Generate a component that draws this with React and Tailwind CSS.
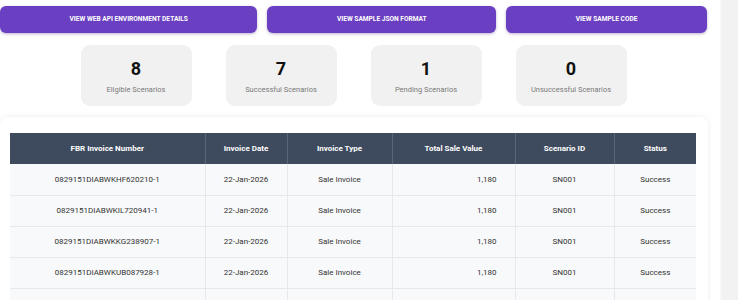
const buttons = [
  'View Web API Environment Details',
  'View Sample JSON Format',
  'View Sample Code',
]

const stats = [
  { value: 8, label: 'Eligible Scenarios' },
  { value: 7, label: 'Successful Scenarios' },
  { value: 1, label: 'Pending Scenarios' },
  { value: 0, label: 'Unsuccessful Scenarios' },
]

const columns = [
  { label: 'FBR Invoice Number', w: 'w-[195px]' },
  { label: 'Invoice Date', w: 'w-[82px]' },
  { label: 'Invoice Type', w: 'w-[105px]' },
  { label: 'Total Sale Value', w: 'w-[123px]' },
  { label: 'Scenario ID', w: 'w-[99px]' },
  { label: 'Status', w: 'w-[82px]' },
]

const rows = [
  '0829151DIABWKHF620210-1',
  '0829151DIABWKIL720941-1',
  '0829151DIABWKKG238907-1',
  '0829151DIABWKUB087928-1',
]

export default function App() {
  return (
    <div className="flex w-[738px] h-[300px] overflow-hidden bg-white font-['Roboto',sans-serif]">
      <main className="w-[720px] shrink-0">
        {/* Action buttons */}
        <div className="flex gap-[10px] w-[707px] pt-[6px]">
          {buttons.map((b) => (
            <button
              key={b}
              className="flex-auto h-[27px] rounded-[6px] bg-[#6b3fc1] text-white text-[6.6px] font-bold uppercase shadow-[0_1px_3px_rgba(60,30,120,0.35)]"
            >
              {b}
            </button>
          ))}
        </div>

        {/* Stats */}
        <div className="flex justify-center gap-[34px] w-[707px] mt-[12px]">
          {stats.map((s) => (
            <div
              key={s.label}
              className="w-[111px] h-[61px] rounded-[9px] bg-[#f1f1f1] flex flex-col items-center pt-[14px]"
            >
              <span className="text-[18px] leading-[20px] font-bold text-[#111]">{s.value}</span>
              <span className="text-[7.5px] text-[#7a7a7a] mt-[5px]">{s.label}</span>
            </div>
          ))}
        </div>

        {/* Table panel */}
        <div className="w-[708px] mt-[11px] rounded-[8px] bg-white shadow-[0_0_6px_rgba(0,0,0,0.08)] pl-[10px] pt-[16px]">
          <table className="border-collapse table-fixed text-[8px]">
            <thead>
              <tr className="bg-[#3e4a5e] text-white h-[31px]">
                {columns.map((c) => (
                  <th
                    key={c.label}
                    className={`${c.w} font-bold border-x border-[#5b6577] first:border-l-0 last:border-r-0`}
                  >
                    {c.label}
                  </th>
                ))}
              </tr>
            </thead>
            <tbody>
              {rows.map((r) => (
                <tr key={r} className="h-[31px] bg-[#f8f9fa] text-[#333] border-b border-[#e6e8eb]">
                  <td className="text-center pt-[1px] border-r border-[#e6e8eb]">{r}</td>
                  <td className="text-center pt-[1px] border-r border-[#e6e8eb]">22-Jan-2026</td>
                  <td className="text-center pt-[1px] border-r border-[#e6e8eb]">Sale Invoice</td>
                  <td className="text-right pt-[1px] pr-[18px] border-r border-[#e6e8eb]">1,180</td>
                  <td className="text-center pt-[1px] border-r border-[#e6e8eb]">SN001</td>
                  <td className="text-center pt-[1px]">Success</td>
                </tr>
              ))}
              <tr className="h-[31px] bg-[#f8f9fa]">
                <td className="border-r border-[#e6e8eb]" />
                <td className="border-r border-[#e6e8eb]" />
                <td className="border-r border-[#e6e8eb]" />
                <td className="border-r border-[#e6e8eb]" />
                <td className="border-r border-[#e6e8eb]" />
                <td />
              </tr>
            </tbody>
          </table>
        </div>
      </main>
      <aside className="flex-1 border-l-2 border-[#f7f7f7] bg-[#f2f2f2]" />
    </div>
  )
}
